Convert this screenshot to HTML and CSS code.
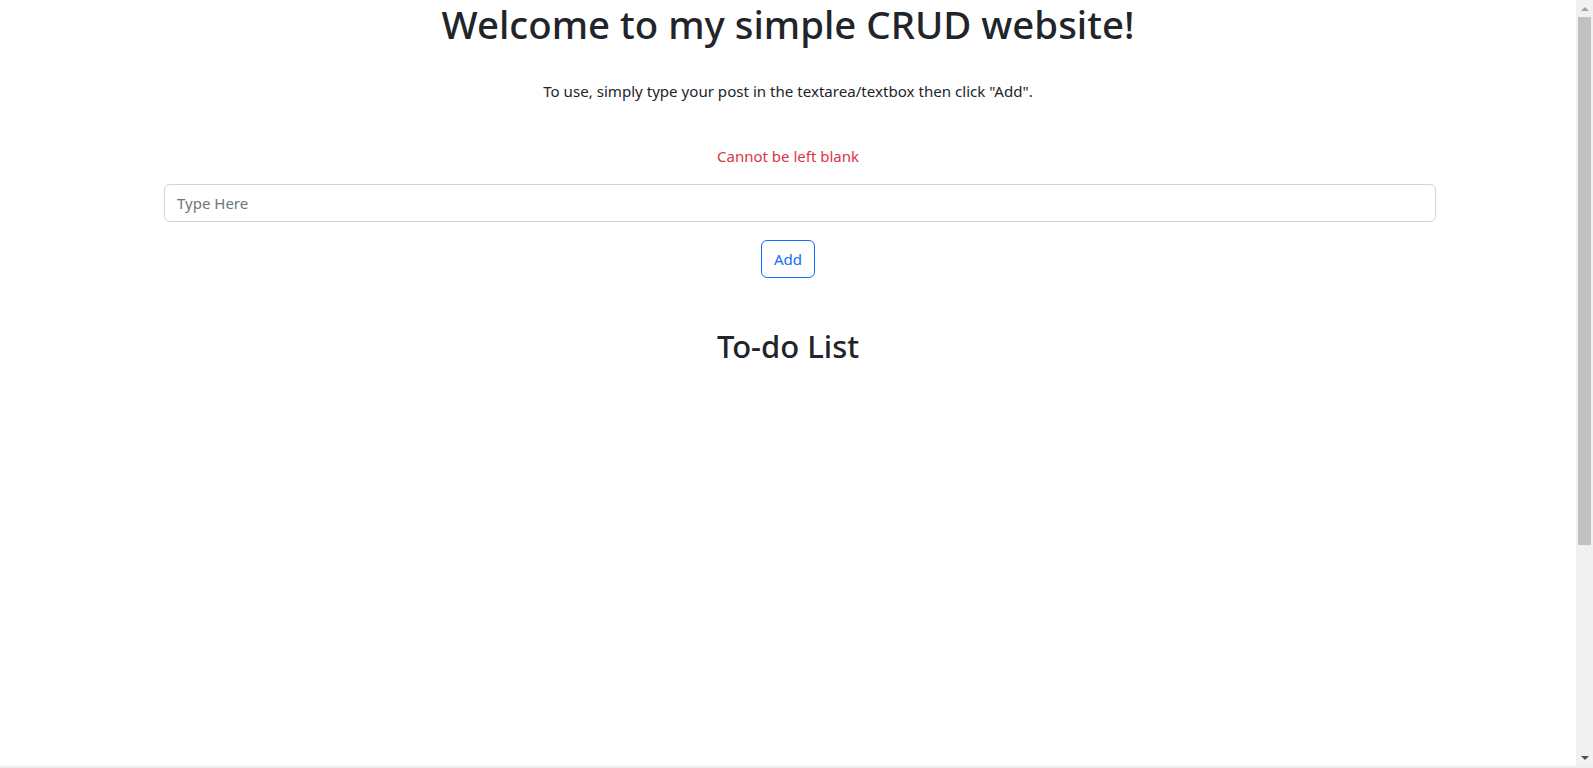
FILE: index.html
```html
<!DOCTYPE html>
<html lang="en">
<head>
<meta charset="utf-8">
<title>Simple CRUD</title>
<link rel="stylesheet" href="styles.css">
</head>
<body>
<div class="app">
  <div class="viewport">
    <main class="page">
      <h1 class="title">Welcome to my simple CRUD website!</h1>
      <p class="intro">To use, simply type your post in the textarea/textbox then click "Add".</p>
      <form class="post-form">
        <div class="error">Cannot be left blank</div>
        <div class="field">
          <input class="input" type="text" placeholder="Type Here">
        </div>
        <div class="actions">
          <button class="btn" type="button">Add</button>
        </div>
      </form>
      <h2 class="list-title">To-do List</h2>
      <ul class="list"></ul>
    </main>
  </div>
  <div class="scrollbar" aria-hidden="true">
    <div class="sb-arrow sb-up"></div>
    <div class="sb-track">
      <div class="sb-thumb"></div>
    </div>
    <div class="sb-arrow sb-down"></div>
  </div>
</div>
</body>
</html>
```
FILE: styles.css
```css
html, body {
  margin: 0;
  padding: 0;
  background: #fff;
  overflow: hidden;
}
body {
  font-family: "Segoe UI", "Noto Sans", "Open Sans", sans-serif;
  color: #212529;
  font-size: 16px;
  line-height: 1.5;
}
.app {
  display: flex;
  height: 766px;
  border-bottom: 2px solid #eeeeee;
}
.viewport {
  flex: 1;
  min-width: 0;
}
.page {
  max-width: 1320px;
  margin: 0 auto;
  padding: 0 12px;
  box-sizing: border-box;
  text-align: center;
}
.title {
  margin: 0 0 31px;
  font-size: 38.4px;
  font-weight: 500;
  line-height: 48px;
}
.intro {
  margin: 0;
  font-size: 15.1px;
  line-height: 24px;
}
.post-form {
  margin: 0;
}
.error {
  margin-top: 41px;
  color: #dc3545;
  font-size: 15px;
  line-height: 24px;
}
.field {
  margin-top: 16px;
  padding-left: 24px;
}
.input {
  display: block;
  width: 100%;
  box-sizing: border-box;
  height: 38px;
  padding: 6px 12px;
  font-family: inherit;
  font-size: 15px;
  color: #212529;
  border: 1px solid #ced4da;
  border-radius: 6px;
  outline: none;
}
.input::placeholder {
  color: #6c757d;
}
.actions {
  margin-top: 18px;
}
.btn {
  height: 38px;
  padding: 6px 12px;
  font-family: inherit;
  font-size: 15px;
  line-height: 24px;
  color: #0d6efd;
  background: transparent;
  border: 1px solid #0d6efd;
  border-radius: 6px;
  cursor: pointer;
}
.list-title {
  margin: 49px 0 0;
  font-size: 31px;
  font-weight: 500;
  line-height: 38px;
}
.list {
  margin: 0;
  padding: 0;
  list-style: none;
}
.scrollbar {
  width: 17px;
  flex: none;
  display: flex;
  flex-direction: column;
  background: #f1f1f1;
}
.sb-arrow {
  height: 17px;
  flex: none;
  display: flex;
  align-items: center;
  justify-content: center;
}
.sb-up::before {
  content: "";
  border-left: 4px solid transparent;
  border-right: 4px solid transparent;
  border-bottom: 4px solid #a3a3a3;
}
.sb-down::before {
  content: "";
  border-left: 4px solid transparent;
  border-right: 4px solid transparent;
  border-top: 4px solid #505050;
}
.sb-track {
  flex: 1;
  padding: 0 2px;
}
.sb-thumb {
  height: 528px;
  background: #c1c1c1;
}
```
